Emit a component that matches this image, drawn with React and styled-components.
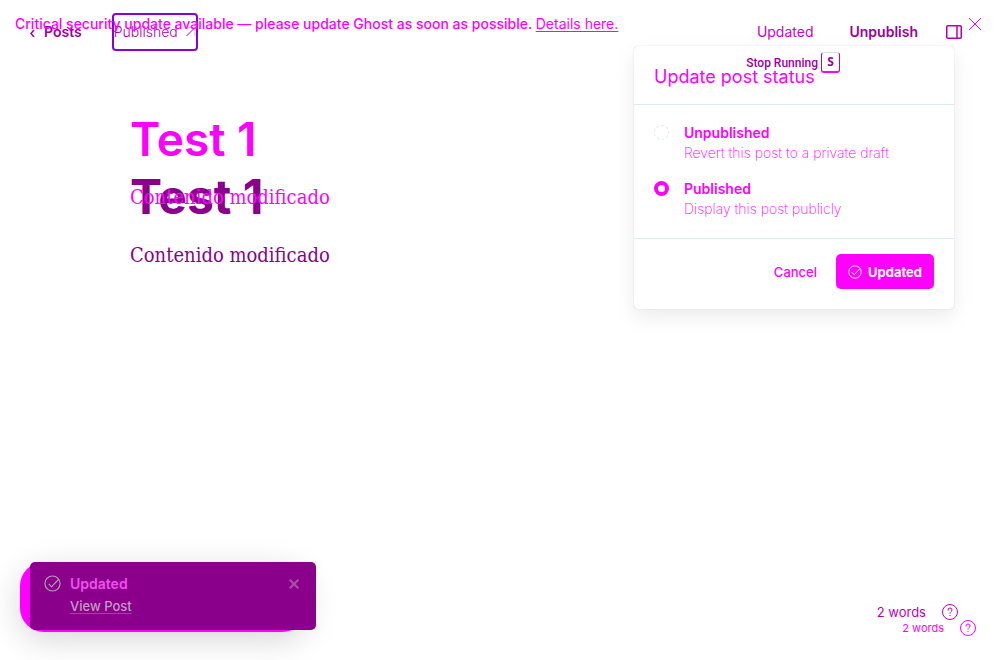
import React from 'react';
import styled, { createGlobalStyle } from 'styled-components';

const Global = createGlobalStyle`
  *, *::before, *::after { box-sizing: border-box; }
  body { margin: 0; background: #fff; font-family: Inter, "Liberation Sans", sans-serif; }
  h1, h2, p { margin: 0; }
  button { font-family: inherit; border: 0; background: none; padding: 0; cursor: pointer; }
  svg { display: block; flex: none; }
`;

const Page = styled.div`
  position: relative;
  min-height: 100vh;
  display: flex;
  flex-direction: column;
  overflow: hidden;
  background: #fff;
`;

const Banner = styled.aside`
  position: absolute;
  inset: 0 0 auto 0;
  display: flex;
  align-items: center;
  justify-content: space-between;
  height: 48px;
  padding: 0 18px 0 15px;
  color: #ff00ff;
  font-size: 14px;
  font-weight: 450;
  line-height: 20px;
  pointer-events: none;

  a { color: inherit; font-weight: 400; text-underline-offset: 2px; pointer-events: auto; }
`;

const IconButton = styled.button`
  display: flex;
  color: ${(p) => p.$color};
  pointer-events: auto;
`;

const Header = styled.header`
  display: flex;
  align-items: center;
  justify-content: space-between;
  height: 64px;
  padding: 0 38px 0 29px;
`;

const HeaderGroup = styled.div`
  display: flex;
  align-items: center;
  gap: ${(p) => p.$gap}px;
`;

const BackLink = styled.a`
  display: flex;
  align-items: center;
  gap: 8px;
  color: #9b009b;
  font-size: 14px;
  font-weight: 600;
  line-height: 20px;
  text-decoration: none;
`;

const StatusLink = styled.a`
  display: flex;
  align-items: center;
  justify-content: space-between;
  width: 86px;
  height: 38px;
  border: 2px solid #8400dc;
  border-radius: 4px;
  color: #b000b0;
  font-size: 14px;
  font-weight: 300;
  line-height: 20px;
  text-decoration: none;
`;

const TextButton = styled.button`
  color: ${(p) => p.$color};
  font-size: ${(p) => p.$size || 14}px;
  font-weight: ${(p) => p.$weight};
  line-height: 20px;
`;

const Editor = styled.main`
  flex: 1;
  display: grid;
  align-content: start;
  padding: 45px 130px;
`;

const Revision = styled.article`
  grid-area: 1 / 1;
  display: flex;
  flex-direction: column;
  gap: 15px;
  padding-top: ${(p) => p.$top}px;
  color: ${(p) => p.$color};
`;

const PostTitle = styled.h1`
  font-size: ${(p) => p.$size}px;
  font-weight: ${(p) => p.$weight};
  line-height: 60px;
`;

const PostBody = styled.p`
  font-family: "DejaVu Serif Condensed", "Liberation Serif", serif;
  font-size: 20px;
  line-height: 26px;
`;

const StopHint = styled.div`
  position: absolute;
  top: 52px;
  right: 160px;
  z-index: 2;
  display: flex;
  align-items: center;
  gap: 3px;
  color: #9b009b;
  font: 500 12px/20px Roboto, "Liberation Sans", sans-serif;
`;

const Key = styled.kbd`
  width: 19px;
  height: 21px;
  border: 1px solid #c000c0;
  border-top-color: #ddd;
  border-bottom: 2px solid #ff00ff;
  border-radius: 3px;
  font: 700 12px/18px "Open Sans", sans-serif;
  text-align: center;
`;

const Dialog = styled.form`
  position: absolute;
  top: 46px;
  right: 46px;
  width: 320px;
  border-radius: 4px;
  background: #fff;
  box-shadow: 0 0 1px rgba(0, 0, 0, 0.3), 0 8px 20px rgba(0, 0, 0, 0.08);
  color: #ff00ff;
`;

const DialogHeader = styled.header`
  padding: 19px 20px 15px;
  border-bottom: 1px solid #dcebf2;
`;

const DialogTitle = styled.h2`
  font-size: 18px;
  font-weight: 400;
  line-height: 24px;
`;

const Options = styled.div`
  display: flex;
  flex-direction: column;
  gap: 16px;
  padding: 18px 20px 19px;
  border-bottom: 1px solid #dcebf2;
`;

const Option = styled.label`
  display: grid;
  grid-template-columns: 15px 1fr;
  column-gap: 15px;
  font-size: 14px;
  font-weight: 600;
  line-height: 20px;
`;

const Radio = styled.input`
  appearance: none;
  width: 15px;
  height: 15px;
  margin: 2px 0 0;
  border: 1px dashed #dcebf2;
  border-radius: 50%;
  background: #fff;

  &:checked { border: 4px solid #ff00ff; }
`;

const OptionText = styled.span`
  grid-column: 2;
  font-size: 14px;
  font-weight: 200;
`;

const DialogFooter = styled.footer`
  display: flex;
  align-items: center;
  justify-content: flex-end;
  gap: 19px;
  padding: 15px 20px 20px;
`;

const PrimaryButton = styled.button`
  display: flex;
  align-items: center;
  justify-content: center;
  gap: 6px;
  width: 98px;
  height: 35px;
  border-radius: 5px;
  background: #ff00ff;
  color: #fff;
  font-size: 13px;
  font-weight: 700;
`;

const ToastStack = styled.div`
  position: absolute;
  left: 20px;
  bottom: 28px;
  padding: 0 0 2px 10px;

  &::before {
    content: "";
    position: absolute;
    inset: 0 10px 0 0;
    border-radius: 24px;
    background: #ff00ff;
    box-shadow: 0 8px 32px rgba(0, 0, 0, 0.16);
  }
`;

const Toast = styled.div`
  position: relative;
  display: grid;
  grid-template-columns: 17px 1fr auto;
  column-gap: 9px;
  align-items: center;
  width: 286px;
  height: 68px;
  padding: 10px 17px 12px 14px;
  border-radius: 5px;
  background: #8b008b;
  color: #b8a0b8;
  font-size: 14px;
  line-height: 23px;

  a {
    grid-column: 2;
    color: #c898c8;
    font-size: 13px;
    font-weight: 500;
    text-decoration-color: #ff00ff;
    text-underline-offset: 2px;
  }
`;

const ToastTitle = styled.strong`
  color: #f050f0;
  font-weight: 600;
`;

const WordCounts = styled.footer`
  position: absolute;
  right: 24px;
  bottom: 24px;
  display: flex;
  flex-direction: column;
  align-items: flex-end;
`;

const WordCount = styled.div`
  display: flex;
  align-items: center;
  gap: 16px;
  height: 16px;
  margin-right: ${(p) => p.$inset}px;
  color: ${(p) => p.$color};
  font-size: ${(p) => p.$size}px;
  font-weight: 400;
`;

const Cross = ({ size, width = 1 }) => (
  <svg width={size} height={size} viewBox="0 0 14 14" fill="none" stroke="currentColor" strokeWidth={width}>
    <path d="M1 1l12 12M13 1L1 13" />
  </svg>
);

const Check = ({ size }) => (
  <svg width={size} height={size} viewBox="0 0 18 18" fill="none" stroke="currentColor" strokeWidth="1.2">
    <circle cx="9" cy="9" r="8" />
    <path d="M5 9.5l3 3 7.5-8" />
  </svg>
);

const Help = () => (
  <svg width="16" height="16" viewBox="0 0 16 16" fill="none" stroke="currentColor">
    <circle cx="8" cy="8" r="7.5" />
    <path d="M6 6.5V6a2 2 0 0 1 4 0c0 1.7-2 1.5-2 3.5M8 11v1" />
  </svg>
);

export default function App() {
  return (
    <Page>
      <Global />
      <Header>
        <HeaderGroup $gap={30}>
          <BackLink href="#posts">
            <svg width="7" height="10" viewBox="0 0 7 10" fill="none" stroke="currentColor" strokeWidth="1.5"><path d="M5 3L2 6.5 5 10" /></svg>
            Posts
          </BackLink>
          <StatusLink href="#post">
            Published
            <svg width="10" height="12" viewBox="0 0 10 12" fill="none" stroke="currentColor"><path d="M1 1.5h8V10" stroke="#d8d0d8" strokeWidth="1.5" /><path d="M0.5 10L9 1.5" /></svg>
          </StatusLink>
        </HeaderGroup>
        <HeaderGroup $gap={28}>
          <HeaderGroup $gap={36}>
            <TextButton $color="#cc00cc" $weight={400}>Updated</TextButton>
            <TextButton $color="#9b009b" $weight={600}>Unpublish</TextButton>
          </HeaderGroup>
          <IconButton $color="#b000b0" aria-label="Settings">
            <svg width="16" height="14" viewBox="0 0 16 14" fill="none" stroke="currentColor" strokeWidth="1.5"><rect x="0.75" y="0.75" width="14.5" height="12.5" rx="1" /><path d="M11 1v12" /></svg>
          </IconButton>
        </HeaderGroup>
      </Header>

      <Editor>
        <Revision $top={58} $color="#8b008b">
          <PostTitle $size={48} $weight={700}>Test 1</PostTitle>
          <PostBody>Contenido modificado</PostBody>
        </Revision>
        <Revision $top={0} $color="#ff00ff">
          <PostTitle $size={46} $weight={600}>Test 1</PostTitle>
          <PostBody>Contenido modificado</PostBody>
        </Revision>
      </Editor>

      <Banner>
        <p>Critical security update available — please update Ghost as soon as possible. <a href="#details">Details here.</a></p>
        <IconButton $color="#ff00ff" aria-label="Close banner"><Cross size={14} /></IconButton>
      </Banner>

      <Dialog>
        <DialogHeader><DialogTitle>Update post status</DialogTitle></DialogHeader>
        <Options>
          <Option>
            <Radio type="radio" name="status" />
            Unpublished
            <OptionText>Revert this post to a private draft</OptionText>
          </Option>
          <Option>
            <Radio type="radio" name="status" defaultChecked />
            Published
            <OptionText>Display this post publicly</OptionText>
          </Option>
        </Options>
        <DialogFooter>
          <TextButton type="button" $color="#ff00ff" $size={13} $weight={500}>Cancel</TextButton>
          <PrimaryButton type="button"><Check size={14} />Updated</PrimaryButton>
        </DialogFooter>
      </Dialog>
      <StopHint>Stop Running <Key>S</Key></StopHint>

      <ToastStack>
        <Toast role="status">
          <Check size={17} />
          <ToastTitle>Updated</ToastTitle>
          <IconButton $color="#a850a8" aria-label="Dismiss"><Cross size={10} width={3} /></IconButton>
          <a href="#view">View Post</a>
        </Toast>
      </ToastStack>

      <WordCounts>
        <WordCount $inset={18} $size={13} $color="#b800b8">2 words <Help /></WordCount>
        <WordCount $inset={0} $size={11} $color="#ff00ff">2 words <Help /></WordCount>
      </WordCounts>
    </Page>
  );
}
